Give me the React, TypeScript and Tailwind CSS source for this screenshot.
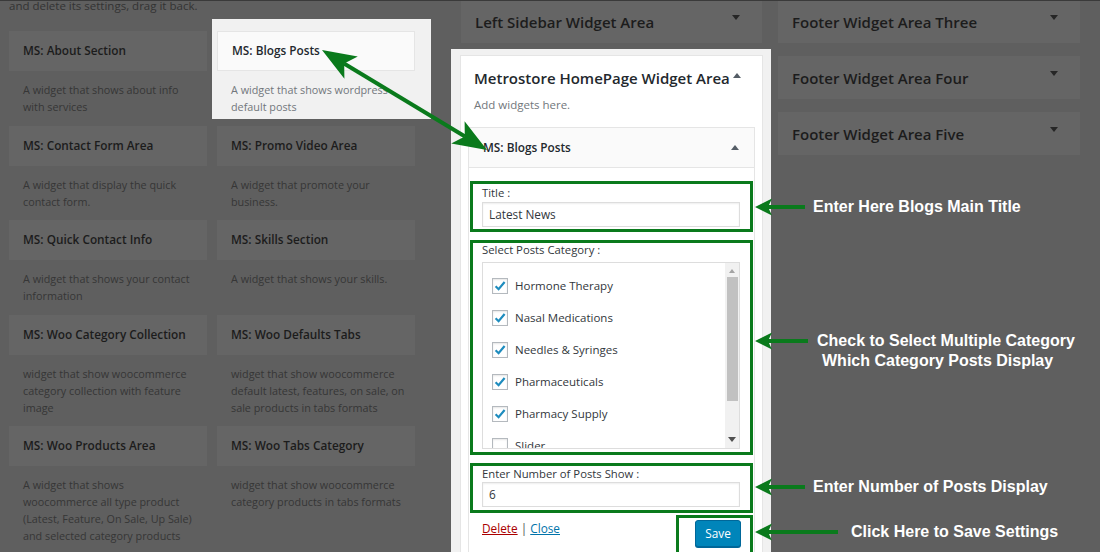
const widgets: [string, string[]][][] = [
  [
    ['MS: About Section', ['A widget that shows about info', 'with services']],
    ['MS: Blogs Posts', ['A widget that shows wordpress', 'default posts']],
  ],
  [
    ['MS: Contact Form Area', ['A widget that display the quick', 'contact form.']],
    ['MS: Promo Video Area', ['A widget that promote your', 'business.']],
  ],
  [
    ['MS: Quick Contact Info', ['A widget that shows your contact', 'information']],
    ['MS: Skills Section', ['A widget that shows your skills.']],
  ],
  [
    ['MS: Woo Category Collection', ['widget that show woocommerce', 'category collection with feature', 'image']],
    ['MS: Woo Defaults Tabs', ['widget that show woocommerce', 'default latest, features, on sale, on', 'sale products in tabs formats']],
  ],
  [
    ['MS: Woo Products Area', ['A widget that shows', 'woocommerce all type product', '(Latest, Feature, On Sale, Up Sale)', 'and selected category products']],
    ['MS: Woo Tabs Category', ['widget that show woocommerce', 'category products in tabs formats']],
  ],
]

const categories = [
  ['Hormone Therapy', true],
  ['Nasal Medications', true],
  ['Needles & Syringes', true],
  ['Pharmaceuticals', true],
  ['Pharmacy Supply', true],
  ['Slider', false],
] as const

function Down({ color = 'border-t-[#262626]' }: { color?: string }) {
  return <span className={`block w-0 h-0 border-x-[4px] border-x-transparent border-t-[5px] ${color}`} />
}

function Up() {
  return <span className="block w-0 h-0 border-x-[4px] border-x-transparent border-b-[5px] border-b-[#555d66]" />
}

function AreaCard({ title }: { title: string }) {
  return (
    <div className="h-[43px] bg-[#656565] flex items-start justify-between pl-[14px] pr-[22px]">
      <span className="text-[15px] leading-[44px] font-semibold text-[#1c1c1c]">{title}</span>
      <span className="mt-[15px]">
        <Down />
      </span>
    </div>
  )
}

function Check({ on }: { on: boolean }) {
  return (
    <span className="w-[16px] h-[16px] shrink-0 border border-[#b4b9be] bg-white shadow-[inset_0_1px_2px_rgba(0,0,0,0.1)] flex items-center justify-center">
      {on && (
        <svg width="14" height="14" viewBox="0 0 14 14">
          <path d="M2.6 7.2 L5.6 10.2 L11.6 3" fill="none" stroke="#1e8cbe" strokeWidth="2.2" />
        </svg>
      )}
    </span>
  )
}

export default function App() {
  const green = '#0a7a1c'
  return (
    <div className="relative w-[1100px] h-[552px] overflow-hidden bg-[#5f5f5f] font-['Open_Sans',sans-serif]">
      <div className="flex items-start">
        {/* available widgets */}
        <div className="w-[451px] shrink-0 pl-[9px]">
          <p className="-mt-[3px] text-[11.5px] leading-[17px] text-[#333]">and delete its settings, drag it back.</p>
          <div className="mt-[17px] grid grid-cols-[198px_198px] gap-x-[10px] items-start">
            {widgets.map((row, r) =>
              row.map(([title, desc], c) =>
                r === 0 && c === 1 ? (
                  <div key={title} className="-mt-[12px] -ml-[5px] -mr-[16px] pt-[12px] pl-[5px] pr-[16px] pb-[4px] bg-[#f1f1f1]">
                    <div className="h-[40px] bg-[#fafafa] border border-[#e5e5e5] pl-[14px] flex items-center text-[11.8px] font-semibold text-[#23282d]">
                      {title}
                    </div>
                    <div className="pt-[10px] pl-[14px] text-[10.8px] leading-[17px] text-[#72777c]">
                      {desc.map((l) => (
                        <div key={l}>{l}</div>
                      ))}
                    </div>
                  </div>
                ) : (
                  <div key={title}>
                    <div className="h-[40px] bg-[#656565] pl-[14px] flex items-center text-[11.8px] font-semibold text-[#1c1c1c]">
                      {title}
                    </div>
                    <div className="pt-[10px] pb-[10.5px] pl-[14px] text-[10.8px] leading-[17px] text-[#363636]">
                      {desc.map((l) => (
                        <div key={l}>{l}</div>
                      ))}
                    </div>
                  </div>
                )
              )
            )}
          </div>
        </div>

        {/* homepage area */}
        <div className="w-[320px] shrink-0">
          <div className="ml-[10px] mr-[9px]">
            <AreaCard title="Left Sidebar Widget Area" />
          </div>
          <div className="mt-[6px] bg-[#f1f1f1] pt-[6px] pl-[9px] pr-[8px] h-[520px]">
            <div className="h-full bg-white border border-[#e5e5e5]">
              <div className="pt-[12px] pl-[13px] pr-[21px] flex items-start justify-between">
                <span className="text-[15px] leading-[20px] font-semibold text-[#23282d]">Metrostore HomePage Widget Area</span>
                <span className="mt-[5px]">
                  <Up />
                </span>
              </div>
              <p className="mt-[8px] pl-[13px] text-[11.5px] leading-[17px] text-[#72777c]">Add widgets here.</p>
              <div className="mt-[14px] mx-[7px]">
                <div className="h-[41px] bg-[#fafafa] border border-[#e5e5e5] pl-[14px] pr-[15px] flex items-center justify-between">
                  <span className="text-[11.8px] font-semibold text-[#23282d]">MS: Blogs Posts</span>
                  <Up />
                </div>
                <div className="bg-white border-x border-[#e5e5e5] px-px pt-[13px] text-[11.3px] text-[#32373c]">
                  <div className="border-[3px] pt-px pl-[9px] pr-[10px] pb-[2px]" style={{ borderColor: green }}>
                    <div className="leading-[16px]">Title :</div>
                    <div className="mt-px h-[25px] border border-[#ddd] shadow-[inset_0_1px_2px_rgba(0,0,0,0.07)] pl-[6px] flex items-center text-[11.8px]">
                      Latest News
                    </div>
                  </div>
                  <div className="mt-[8px] border-[3px] pl-[9px] pr-[10px] pb-[3px]" style={{ borderColor: green }}>
                    <div className="leading-[13px]">Select Posts Category :</div>
                    <div className="mt-[6px] h-[187px] border border-[#ddd] flex overflow-hidden">
                      <div className="flex-1 pt-[7px] pl-[9px]">
                        {categories.map(([name, on]) => (
                          <div key={name} className="h-[32px] flex items-center gap-[7px] text-[11.5px]">
                            <Check on={on} />
                            <span>{name}</span>
                          </div>
                        ))}
                      </div>
                      <div className="w-[14px] bg-[#f1f1f1] flex flex-col items-center">
                        <span className="mt-[6px] block w-0 h-0 border-x-[3.5px] border-x-transparent border-b-[4px] border-b-[#a3a3a3]" />
                        <div className="mt-[4px] w-[11px] h-[124px] bg-[#c1c1c1]" />
                        <div className="flex-1" />
                        <span className="mb-[6px]">
                          <Down color="border-t-[#505050]" />
                        </span>
                      </div>
                    </div>
                  </div>
                  <div className="mt-[8px] border-[3px] pl-[9px] pr-[10px] pb-[3px]" style={{ borderColor: green }}>
                    <div className="leading-[16px]">Enter Number of Posts Show :</div>
                    <div className="h-[25px] border border-[#ddd] shadow-[inset_0_1px_2px_rgba(0,0,0,0.07)] pl-[6px] flex items-center text-[11.8px]">
                      6
                    </div>
                  </div>
                  <div className="mt-[2px] flex items-start justify-between">
                    <div className="pl-[12px] pt-[5px] leading-[16px] text-[11.8px]">
                      <span className="text-[#a00] underline">Delete</span>
                      <span className="text-[#555]"> | </span>
                      <span className="text-[#0073aa] underline">Close</span>
                    </div>
                    <div className="w-[77px] h-[40px] border-[3px] border-b-0 pl-[16px] pt-[2px]" style={{ borderColor: green }}>
                      <div className="w-[46px] h-[27px] rounded-[3px] bg-[#0085ba] border border-[#006799] shadow-[0_1px_0_#006799] flex items-center justify-center text-white text-[11.8px]">
                        Save
                      </div>
                    </div>
                  </div>
                </div>
              </div>
            </div>
          </div>
        </div>

        {/* footer areas + notes */}
        <div className="ml-[7px] w-[302px] shrink-0">
          <div className="flex flex-col gap-[13px]">
            <AreaCard title="Footer Widget Area Three" />
            <AreaCard title="Footer Widget Area Four" />
            <AreaCard title="Footer Widget Area Five" />
          </div>
          <div className="font-['Liberation_Sans',Arial,sans-serif] font-bold text-white text-[16px] whitespace-nowrap">
            <p className="mt-[43px] pl-[35px] leading-[18px]">Enter Here Blogs Main Title</p>
            <div className="mt-[115px] leading-[20px]">
              <p className="pl-[39px]">Check to Select Multiple Category</p>
              <p className="pl-[44px]">Which Category Posts Display</p>
            </div>
            <p className="mt-[107px] pl-[35px] leading-[18px]">Enter Number of Posts Display</p>
            <p className="mt-[27px] pl-[73px] leading-[18px]">Click Here to Save Settings</p>
          </div>
        </div>
      </div>

      <div className="absolute inset-x-0 top-0 h-px bg-[#3a3a3a]" />

      <svg className="absolute inset-0 pointer-events-none" width="1100" height="552" viewBox="0 0 1100 552">
        <g fill={green} stroke={green}>
          <line x1="344" y1="63.5" x2="465" y2="136.5" strokeWidth="4" />
          <polygon points="322,50 357.8,56.5 344.2,63.5 344.4,78.7" stroke="none" />
          <polygon points="487,150 451.2,143.5 464.8,136.5 464.6,121.3" stroke="none" />
          {[
            [207, 805],
            [341, 808],
            [487, 805],
            [532, 838],
          ].map(([y, x2]) => (
            <g key={y}>
              <line x1="768" y1={y} x2={x2} y2={y} strokeWidth="4" />
              <polygon points={`755,${y} 772,${y - 8.5} 768,${y} 772,${y + 8.5}`} stroke="none" />
            </g>
          ))}
        </g>
      </svg>
    </div>
  )
}
